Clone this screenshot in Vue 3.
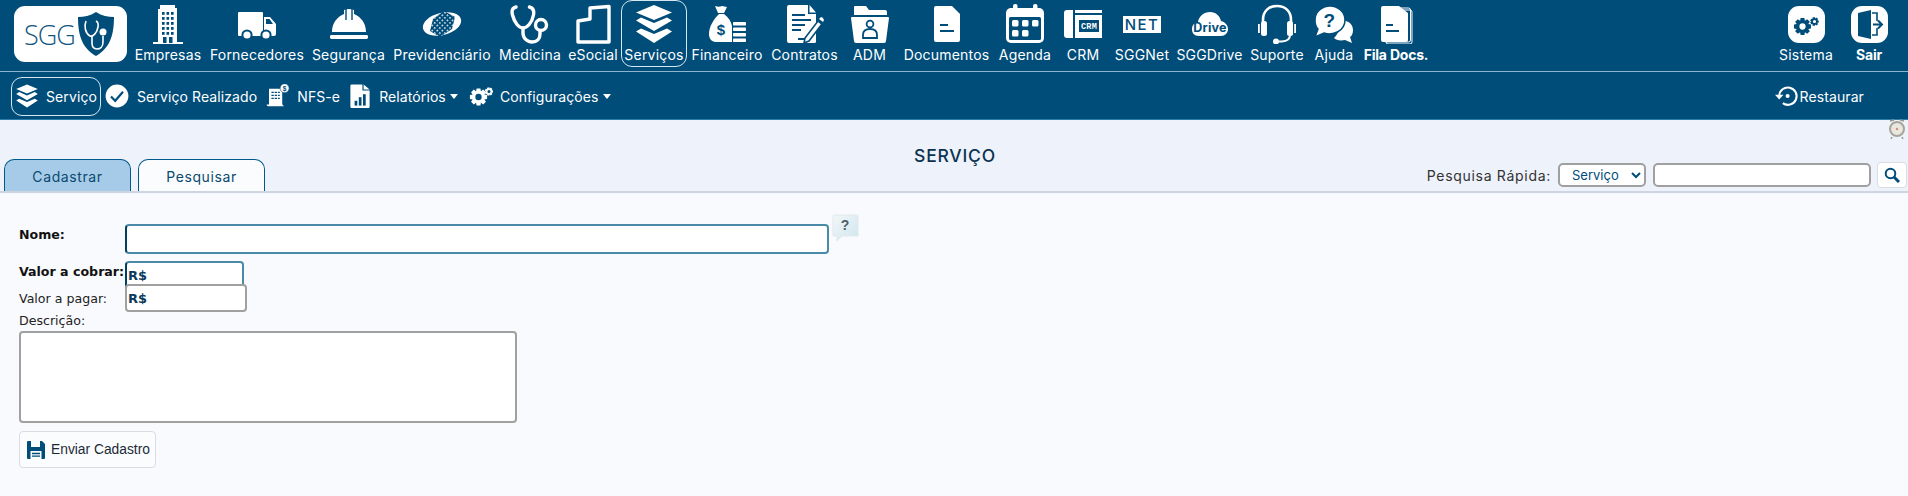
<script setup>
import { ref } from 'vue';

const BLUE = '#004d7a';

// engrenagem com furo, usada em Sistema e Configurações
const gear = (cx, cy, R, c, teeth = 8) => {
  const r = R * 0.72;
  const hole = R * 0.36;
  const step = (Math.PI * 2) / teeth;
  const pts = [];
  for (let i = 0; i < teeth; i++) {
    const a = i * step;
    [[r, -0.5], [R, -0.28], [R, 0.28], [r, 0.5]].forEach(([rad, k]) => {
      const t = a + k * step;
      pts.push(`${(cx + rad * Math.cos(t)).toFixed(2)} ${(cy + rad * Math.sin(t)).toFixed(2)}`);
    });
  }
  const d = `M${pts.join('L')}Z M${cx + hole} ${cy}a${hole} ${hole} 0 1 0 ${-2 * hole} 0a${hole} ${hole} 0 1 0 ${2 * hole} 0Z`;
  return `<path d="${d}" fill="${c}" fill-rule="evenodd"/>`;
};

const layers = `
  <path d="M20 1 38 8.500 20 16 2 8.500z"/>
  <path d="M7 13.500 20 19 33 13.500 38 16.500 20 27 2 16.500z"/>
  <path d="M7 24.500 20 30 33 24.500 38 27.500 20 39 2 27.500z"/>`;

const icons = {
  empresas: `
    <path d="M10 5h2V1h15v3h2v35H10z"/><rect x="5" y="38" width="30" height="3.500"/>
    ${[8, 13, 18, 23, 28].map(y => [14, 18.500, 23].map(x => `<rect x="${x}" y="${y}" width="2.600" height="2.800" fill="${BLUE}"/>`).join('')).join('')}
    <rect x="15" y="33" width="3.500" height="6" fill="${BLUE}"/><rect x="21" y="33" width="3.500" height="6" fill="${BLUE}"/>`,
  fornecedores: `
    <path d="M1 9q0-1 1-1h23q1 0 1 1v23H2q-1 0-1-1z"/>
    <path d="M27 13h6l6 7v10q0 2-2 2H27z"/><path d="M29 15h3.500l3.500 5h-7z" fill="${BLUE}"/>
    <circle cx="10" cy="31" r="4.600" stroke="${BLUE}" stroke-width="2"/><circle cx="29" cy="31" r="4.600" stroke="${BLUE}" stroke-width="2"/>`,
  seguranca: `
    <path d="M3 28C3 19 8 13 15 10V6q5-2 10 0v4c7 3 12 9 12 18z"/>
    <path d="M17 5v11M23 5v11" stroke="${BLUE}" stroke-width="1.400"/>
    <rect x="1" y="31" width="38" height="4" rx="1.400"/>`,
  previdenciario: `
    <defs><pattern id="prevdots" width="3.600" height="3.600" patternUnits="userSpaceOnUse" patternTransform="rotate(45)"><rect width="1.500" height="1.500" fill="#fff"/></pattern></defs>
    <ellipse cx="20" cy="20" rx="19.500" ry="11" transform="rotate(-14 20 20)"/>
    <path d="M22 7 33 13 30 25 18 33 8 27 11 15z" fill="${BLUE}"/>
    <path d="M22 7 33 13 30 25 18 33 8 27 11 15z" fill="url(#prevdots)"/>`,
  medicina: `
    <g fill="none" stroke="#fff" stroke-width="3.400" stroke-linecap="round">
    <path d="M6 3C2 4 1.500 7 2.500 11 4.500 19 9 24 13 24c4 0 9-5 10.500-13 .7-4 0-7-4-8"/>
    <path d="M13 24v5c0 5 4 9 9 9s8-3 8-8v-3"/><circle cx="31" cy="21" r="5.500"/></g>`,
  esocial: `<path d="M5 17 17 15V4L36 2.500V38H5z" fill="none" stroke="#fff" stroke-width="3.400" stroke-linejoin="round"/>`,
  servicos: layers,
  financeiro: `
    <path d="M8 2q4 1.500 7 0l5 1-3 6h-6z"/>
    <path d="M12 10h5c4 3 7 7 8 12v16H9C4 38 2 34 2 30c0-8 5-15 10-20z"/>
    <text x="14" y="31" font-size="15" font-weight="700" text-anchor="middle" fill="${BLUE}" font-family="Liberation Sans">$</text>
    ${[18, 23.500, 29, 34.500].map(y => `<rect x="26" y="${y}" width="13" height="3.500" rx=".8"/>`).join('')}`,
  contratos: `
    <path d="M2 3q0-2 2-2h19v9h8v28q0 1-2 1H4q-2 0-2-2z"/><path d="M24.500 1 31 8.500h-6.500z"/>
    <path d="M7 11h13M7 16h19M7 21h13M7 26h9" stroke="${BLUE}" stroke-width="2"/>
    <path d="M13 35h8" stroke="${BLUE}" stroke-width="2"/>
    <path d="M20 34 33 17l4 3-13 17-5 2z" stroke="${BLUE}" stroke-width="1.600"/><path d="M34 15l2-2q2 0 3 3l-1 2z"/>`,
  adm: `
    <path d="M4 3q0-1 1-1h11l3 4h16q2 0 2 2v3H4z"/>
    <path d="M1 14q0-1 1-1h36q1 0 1 1l-3 23q0 2-2 2H6q-2 0-2-2z"/>
    <circle cx="20" cy="20" r="3.400" fill="none" stroke="${BLUE}" stroke-width="1.800"/>
    <path d="M13 34v-3q0-6 7-6t7 6v3z" fill="none" stroke="${BLUE}" stroke-width="1.800"/>`,
  documentos: `
    <path d="M7 4q0-2 2-2h16l8 8v26q0 2-2 2H9q-2 0-2-2z"/>
    <path d="M13 21h8M13 27h14" stroke="${BLUE}" stroke-width="1.800"/>`,
  agenda: `
    <rect x="1" y="4" width="38" height="35" rx="5"/><rect x="8" y="0" width="4.500" height="8" rx="2"/><rect x="28" y="0" width="4.500" height="8" rx="2"/>
    <rect x="4" y="13" width="32" height="23" rx="1.500" fill="${BLUE}"/>
    ${[[7, 16], [17, 16], [27, 16], [7, 26], [17, 26]].map(([x, y]) => `<rect x="${x}" y="${y}" width="6.500" height="6.500" rx="1.500"/>`).join('')}`,
  crm: `
    <path d="M1 9q0-3 3-3h6v28H4q-3 0-3-3z"/><rect x="12" y="6" width="27" height="3"/>
    <path d="M12 11h27v23H12z"/>
    <rect x="16" y="16" width="20" height="12" fill="${BLUE}"/>
    <text x="26" y="25" font-size="8.500" font-weight="700" text-anchor="middle" fill="#fff" font-family="Liberation Mono">CRM</text>`,
  sggnet: `
    <rect x="1" y="12" width="38" height="17"/>
    <text x="20" y="26" font-size="15" font-weight="500" letter-spacing="1.500" text-anchor="middle" fill="${BLUE}" font-family="Inter">NET</text>`,
  sggdrive: `
    <path d="M9 32C4 32 2 29 2 25s3-7 6-7c1-6 6-10 12-10s10 4 11 9c4 1 7 4 7 8s-3 7-7 7z"/>
    <text x="20" y="28" font-size="12.500" font-weight="700" text-anchor="middle" fill="${BLUE}" font-family="Inter">Drive</text>`,
  suporte: `
    <path d="M6 21V16C6 7 12 2 20 2s14 5 14 14v5" fill="none" stroke="#fff" stroke-width="2.600"/>
    <rect x="4" y="17" width="6" height="15" rx="2.500"/><rect x="30" y="17" width="6" height="15" rx="2.500"/>
    <rect x="1" y="20" width="1.800" height="9"/><rect x="37.200" y="20" width="1.800" height="9"/>
    <path d="M33 31q0 6-8 6.500h-5" fill="none" stroke="#fff" stroke-width="2"/><circle cx="19" cy="37.500" r="3"/>`,
  ajuda: `
    <path d="M25 17c7-2 14 2 14 9 0 3-1 6-3 7l2 6-7-3c-5 1-9 0-11-2 4-4 7-10 5-17z"/>
    <path d="M16 2C8 2 1 8 1 16c0 4 1 7 3 9l-3 8 9-4c9 3 21-2 21-13C31 8 24 2 16 2z" stroke="${BLUE}" stroke-width="1.500"/>
    <text x="15.500" y="23" font-size="19" font-weight="700" text-anchor="middle" fill="${BLUE}" font-family="Liberation Sans">?</text>`,
  fila: `
    <rect x="10" y="6" width="26" height="34" rx="2" fill="none" stroke="#fff" stroke-width="1"/>
    <rect x="8.500" y="4" width="26" height="34" rx="2" fill="none" stroke="#fff" stroke-width="1"/>
    <path d="M5 4q0-2 2-2h16l9 7v27q0 2-2 2H7q-2 0-2-2z"/>
    <path d="M10 21h7M10 27h13" stroke="${BLUE}" stroke-width="1.800"/>`,
  sistema: `${gear(14.500, 20.500, 8.700, BLUE)}${gear(26.500, 15.500, 4.400, BLUE, 7)}`,
  check: `<circle cx="20" cy="20" r="19"/><path d="M10 21 17 28 30 13" fill="none" stroke="${BLUE}" stroke-width="3.600"/>`,
  nfse: `
    <path d="M5 8h22v24q0 3 3 5H4q-3 0-3-3h4z"/>
    <path d="M9 14h14M9 19h14M9 24h14" stroke="${BLUE}" stroke-width="2.400" stroke-dasharray="4 1.500"/>
    <circle cx="31" cy="7" r="7.500" stroke="${BLUE}"/>
    <text x="31" y="11" font-size="11" font-weight="700" text-anchor="middle" fill="${BLUE}" font-family="Liberation Sans">$</text>`,
  relatorios: `
    <path d="M4 3q0-2 2-2h18v10h12v27q0 2-2 2H6q-2 0-2-2z"/><path d="M26 1 36 9H26z"/>
    <rect x="11" y="28" width="4.500" height="8" fill="${BLUE}"/><rect x="18" y="22" width="4.500" height="14" fill="${BLUE}"/><rect x="25" y="17" width="4.500" height="19" fill="${BLUE}"/>`,
  config: `${gear(9.500, 13, 8.800, '#fff')}${gear(20, 7.500, 4.300, '#fff', 7)}`,
  restaurar: `
    <path d="M7 20A14.500 14.500 0 1 1 13 32" fill="none" stroke="#fff" stroke-width="3.400"/>
    <path d="M0 18H14L7 26z"/><circle cx="21" cy="20" r="3.400"/>`,
};

const topItems = [
  { key: 'empresas', label: 'Empresas' },
  { key: 'fornecedores', label: 'Fornecedores' },
  { key: 'seguranca', label: 'Segurança' },
  { key: 'previdenciario', label: 'Previdenciário' },
  { key: 'medicina', label: 'Medicina' },
  { key: 'esocial', label: 'eSocial' },
  { key: 'servicos', label: 'Serviços', active: true },
  { key: 'financeiro', label: 'Financeiro' },
  { key: 'contratos', label: 'Contratos' },
  { key: 'adm', label: 'ADM' },
  { key: 'documentos', label: 'Documentos' },
  { key: 'agenda', label: 'Agenda' },
  { key: 'crm', label: 'CRM' },
  { key: 'sggnet', label: 'SGGNet' },
  { key: 'sggdrive', label: 'SGGDrive' },
  { key: 'suporte', label: 'Suporte' },
  { key: 'ajuda', label: 'Ajuda' },
  { key: 'fila', label: 'Fila Docs.', bold: true },
];

const tipoBusca = ref('Serviço');
</script>

<template>
  <div class="page">
    <header class="top">
      <div class="logo">
        <span class="logo-text">SGG</span>
        <svg class="logo-shield" viewBox="0 0 36 44">
          <path d="M18 0C12 4 6 5 0 5c0 18 4 31 18 39C32 36 36 23 36 5c-6 0-12-1-18-5z" fill="#004d7a" />
          <g fill="none" stroke="#fff" stroke-width="1.600">
            <path d="M8 9C6 14 7 21 12 24c3 1 7-3 8-9 .5-3 0-5-2-6" />
            <path d="M14 24v7c0 4 2 6 5 6s6-2 6-7v-6" />
          </g>
          <circle cx="25" cy="20" r="3.500" fill="#fff" />
        </svg>
      </div>
      <nav class="modules">
        <a v-for="item in topItems" :key="item.key" class="module" :class="{ active: item.active, bold: item.bold }">
          <svg class="module-icon" viewBox="0 0 40 40" fill="#fff" v-html="icons[item.key]"></svg>
          <span>{{ item.label }}</span>
        </a>
      </nav>
      <div class="system">
        <a class="module sys">
          <span class="sys-icon"><svg viewBox="0 0 37 37" v-html="icons.sistema"></svg></span>
          <span>Sistema</span>
        </a>
        <a class="module sys bold">
          <span class="sys-icon">
            <svg viewBox="0 0 37 37" fill="#004d7a">
              <path d="M7 7 20 4v29L7 30z" />
              <path d="M21 7h5v8M26 22v7h-5" fill="none" stroke="#004d7a" stroke-width="1.600" />
              <path d="M22 18.500h8M27 14.500l4 4-4 4" fill="none" stroke="#004d7a" stroke-width="2" />
            </svg>
          </span>
          <span>Sair</span>
        </a>
      </div>
    </header>

    <div class="subnav">
      <a class="sub-item current">
        <svg class="sub-icon" viewBox="0 0 40 40" fill="#fff" v-html="icons.servicos"></svg>
        <span>Serviço</span>
      </a>
      <a class="sub-item realizado">
        <svg class="sub-icon" viewBox="0 0 40 40" fill="#fff" v-html="icons.check"></svg>
        <span>Serviço Realizado</span>
      </a>
      <a class="sub-item nfse">
        <svg class="sub-icon" viewBox="0 0 40 40" fill="#fff" v-html="icons.nfse"></svg>
        <span>NFS-e</span>
      </a>
      <a class="sub-item relat">
        <svg class="sub-icon" viewBox="0 0 40 40" fill="#fff" v-html="icons.relatorios"></svg>
        <span class="has-caret">Relatórios</span><i class="caret"></i>
      </a>
      <a class="sub-item config">
        <svg class="sub-icon" viewBox="0 0 24 24" fill="#fff" v-html="icons.config"></svg>
        <span class="has-caret">Configurações</span><i class="caret"></i>
      </a>
      <a class="sub-item restore">
        <svg class="sub-icon" viewBox="0 0 40 40" fill="#fff" v-html="icons.restaurar"></svg>
        <span>Restaurar</span>
      </a>
    </div>

    <section class="head">
      <svg class="clock" viewBox="0 0 16 20">
        <path d="M1 2 5 1M15 2l-4-1M3 18l-1 2M13 18l1 2" stroke="#9a9a90" stroke-width="1.500" />
        <circle cx="8" cy="10" r="7" fill="#e9e7de" stroke="#a5a59c" stroke-width="2" />
        <circle cx="8" cy="10" r="1.200" fill="#d88" />
      </svg>
      <div class="tabs">
        <a class="tab on">Cadastrar</a>
        <a class="tab">Pesquisar</a>
      </div>
      <h1>SERVIÇO</h1>
      <div class="quick">
        <label>Pesquisa Rápida:</label>
        <select v-model="tipoBusca">
          <option>Serviço</option>
        </select>
        <input type="text" class="quick-input" />
        <button class="quick-go" type="button">
          <svg viewBox="0 0 16 16" width="16" height="16" fill="none" stroke="#004d7a">
            <circle cx="6.500" cy="6.500" r="4.800" stroke-width="2" />
            <path d="M10 10 15 15" stroke-width="3" />
          </svg>
        </button>
      </div>
    </section>

    <form class="form" @submit.prevent>
      <div class="row row-nome">
        <label class="strong">Nome:</label>
        <input type="text" class="field nome req" />
        <span class="help">
          <svg viewBox="0 0 27 28" width="27" height="28">
            <defs>
              <linearGradient id="helpbg" x1="0" y1="0" x2="1" y2="1">
                <stop offset="0" stop-color="#f2f7f9" />
                <stop offset="1" stop-color="#cfe5ed" />
              </linearGradient>
            </defs>
            <path d="M2 1h23q1 0 1 1v19q1 0 0 1H10l-5 5v-5H2q-1 0-1-1V2q0-1 1-1z" fill="url(#helpbg)" stroke="#e1e9ec" />
            <text x="13" y="16" text-anchor="middle" font-size="14" font-weight="700" fill="#4f5d69" font-family="Liberation Sans">?</text>
          </svg>
        </span>
      </div>
      <div class="row row-cobrar">
        <label class="strong">Valor a cobrar:</label>
        <input type="text" class="field money req" value="R$" />
      </div>
      <div class="row row-pagar">
        <label>Valor a pagar:</label>
        <input type="text" class="field money" value="R$" />
      </div>
      <label class="desc-label">Descrição:</label>
      <textarea class="field desc"></textarea>
      <button class="send" type="submit">
        <svg viewBox="0 0 20 20" width="20" height="20">
          <path d="M1 2q0-1 1-1h14l3 3v14q0 1-1 1H2q-1 0-1-1z" fill="#004d7a" />
          <rect x="5" y="1" width="9" height="6" fill="#fbfcfe" />
          <rect x="4.500" y="11" width="11" height="8" fill="#fbfcfe" />
          <path d="M6 13.500h8M6 16.200h8" stroke="#004d7a" stroke-width="1.300" />
        </svg>
        <span>Enviar Cadastro</span>
      </button>
    </form>
  </div>
</template>

<style scoped>
.page {
  height: 496px;
  width: 1908px;
  overflow: hidden;
  background: #f9fafd;
  font-family: Inter, "Open Sans", sans-serif;
}

a {
  color: inherit;
  text-decoration: none;
}

/* faixa de cima */
.top {
  height: 71px;
  background: #004d7a;
  color: #fff;
  display: flex;
  border-bottom: 1px solid #8fb5cc;
}

.logo {
  width: 113px;
  height: 56px;
  margin: 6px 0 0 14px;
  flex: none;
  box-sizing: border-box;
  background: #fff;
  border-radius: 11px;
  display: flex;
  align-items: center;
  padding-left: 10px;
  gap: 3px;
}

.logo-text {
  color: #12567f;
  font-size: 27px;
  font-weight: 300;
  letter-spacing: -1px;
  font-family: "Open Sans", sans-serif;
}

.logo-shield {
  width: 36px;
  height: 44px;
}

.modules {
  display: grid;
  grid-template-columns: 76px 102px 81px 106px 70px 56px 66px 80px 75px 55px 99px 58px 58px 60px 75px 60px 54px 70px;
  margin-left: 3px;
  height: 67px;
}

.module {
  display: flex;
  flex-direction: column;
  align-items: center;
  font-size: 14px;
  white-space: nowrap;
  box-sizing: border-box;
  border: 1px solid transparent;
  border-radius: 11px;
  letter-spacing: 0.2px;
}

.module.active {
  border-color: #d5e6f0;
}

.module.bold {
  font-weight: 700;
  letter-spacing: -0.2px;
}

.module-icon {
  width: 40px;
  height: 40px;
  margin: 3px 0 2px;
  flex: none;
}

.system {
  margin-left: auto;
  display: flex;
  gap: 3px;
  padding-right: 9px;
}

.module.sys {
  width: 60px;
}

.sys-icon {
  width: 37px;
  height: 37px;
  margin: 5px 0 3px;
  background: #fff;
  border-radius: 11px;
  display: flex;
  align-items: center;
  justify-content: center;
}

.sys-icon svg {
  width: 37px;
  height: 37px;
}

/* segunda faixa */
.subnav {
  height: 46px;
  padding-top: 1px;
  background: #004d7a;
  border-bottom: 1px solid #2a7ea8;
  color: #fff;
  display: flex;
  align-items: center;
  font-size: 14px;
  letter-spacing: 0.1px;
  padding-left: 11px;
}

.sub-item {
  display: flex;
  align-items: center;
  white-space: nowrap;
}

.sub-icon {
  width: 24px;
  height: 24px;
  flex: none;
}

.current {
  width: 90px;
  height: 39px;
  box-sizing: border-box;
  border: 1px solid #d5e6f0;
  border-radius: 11px;
  padding-left: 3px;
  gap: 7px;
}

.realizado {
  margin-left: 4px;
  gap: 8px;
}

.nfse {
  margin-left: 9px;
  gap: 7px;
}

.relat {
  margin-left: 8px;
}

.relat .has-caret {
  margin-left: 7px;
}

.config {
  margin-left: 11px;
}

.config .has-caret {
  margin-left: 7px;
}

.caret {
  display: inline-block;
  margin-left: 4px;
  border-top: 5px solid #fff;
  border-left: 4.500px solid transparent;
  border-right: 4.500px solid transparent;
}

.restore {
  margin-left: auto;
  margin-right: 44px;
  gap: 1px;
}

/* titulo e abas */
.head {
  height: 73px;
  box-sizing: border-box;
  background: #eef2fb;
  border-bottom: 2px solid #cfd5e0;
  display: flex;
  align-items: flex-end;
  position: relative;
}

.clock {
  position: absolute;
  right: 3px;
  top: -1px;
  width: 16px;
  height: 20px;
}

.tabs {
  display: flex;
  gap: 7px;
  padding-left: 4px;
  width: 600px;
}

.tab {
  width: 127px;
  height: 32px;
  box-sizing: border-box;
  border: 1px solid #00598a;
  border-bottom: 0;
  border-radius: 10px 10px 0 0;
  background: #fbfcfe;
  color: #0a4a6f;
  font-size: 14px;
  letter-spacing: 0.6px;
  text-align: center;
  line-height: 33px;
}

.tab.on {
  background: #a6cbe8;
}

h1 {
  position: absolute;
  left: 0;
  right: 0;
  top: 25px;
  margin: 0;
  text-align: center;
  font-size: 17.500px;
  letter-spacing: 0.8px;
  font-weight: 500;
  color: #0b3350;
  padding-left: 2px;
}

.quick {
  margin-left: auto;
  display: flex;
  align-items: center;
  height: 30px;
  margin-bottom: 1px;
  padding-right: 1px;
  font-size: 14px;
  color: #333;
}

.quick label {
  margin-right: 7px;
  letter-spacing: 0.7px;
}

.quick select {
  width: 88px;
  height: 24px;
  box-sizing: border-box;
  border: 2px solid #a0a0a0;
  border-radius: 5px;
  background: #fff;
  color: #004d7a;
  font: 13px Inter, sans-serif;
  padding-left: 8px;
}

.quick-input {
  width: 218px;
  height: 24px;
  box-sizing: border-box;
  margin-left: 7px;
  border: 2px solid #a0a0a0;
  border-radius: 5px;
  background: #fff;
}

.quick-go {
  width: 30px;
  height: 26px;
  margin-left: 6px;
  padding: 0;
  border: 1px solid #d9dde3;
  border-radius: 4px;
  background: #fff;
  display: flex;
  align-items: center;
  justify-content: center;
}

/* formulario */
.form {
  padding: 31px 0 0 19px;
  font-family: "DejaVu Sans", Verdana, sans-serif;
  font-size: 12.600px;
  color: #222;
  display: flex;
  flex-direction: column;
  align-items: flex-start;
}

.row {
  display: flex;
  align-items: center;
}

.row label {
  width: 106px;
  white-space: nowrap;
}

.strong {
  font-weight: 700;
  color: #111;
}

.row-nome {
  align-items: flex-start;
}

.row-nome label {
  padding-top: 3px;
}

.row-cobrar {
  margin-top: 7px;
  margin-bottom: -5px;
}

.row-cobrar label {
  padding-bottom: 8px;
}

.field {
  box-sizing: border-box;
  border: 2px solid #a0a0a0;
  border-radius: 4px;
  background: #fff;
  padding: 0 1px;
  outline: none;
  font-family: "DejaVu Sans", Verdana, sans-serif;
}

.req {
  border-color: #4a8aa8;
  border-left-color: #00405f;
}

.nome {
  width: 704px;
  height: 30px;
}

.help {
  margin-left: 3px;
  margin-top: -10px;
  height: 28px;
}

.money {
  width: 119px;
  height: 28px;
  font-weight: 700;
  font-size: 13px;
  color: #0a3a5c;
}

.row-pagar {
  position: relative;
}

.row-pagar .money {
  width: 122px;
}

.desc-label {
  line-height: 17px;
}

.desc {
  width: 498px;
  height: 92px;
  margin-top: 2px;
  resize: none;
  display: block;
}

.send {
  margin-top: 8px;
  width: 137px;
  height: 37px;
  box-sizing: border-box;
  border: 1px solid #d9dde3;
  border-radius: 4px;
  background: #fbfcfe;
  display: flex;
  align-items: center;
  gap: 5px;
  padding: 0 0 0 6px;
  font: 13.800px "Liberation Sans", Arial, sans-serif;
  color: #1c2a36;
}
</style>

<style>
html, body {
  margin: 0;
  background: #f9fafd;
}
</style>
